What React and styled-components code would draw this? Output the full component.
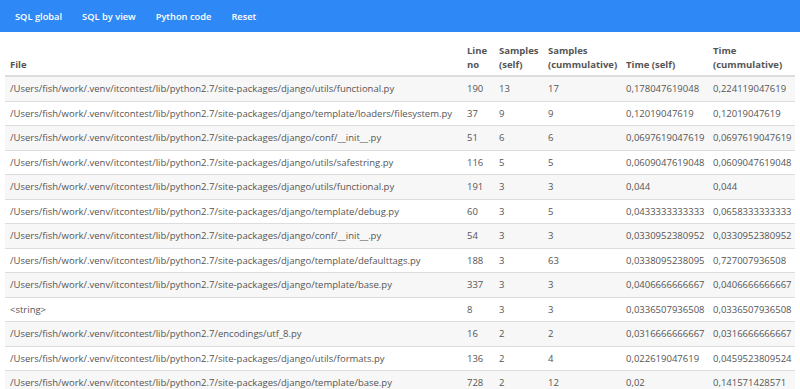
import React from 'react';
import styled, { createGlobalStyle } from 'styled-components';

const GlobalStyle = createGlobalStyle`
    body {
        margin: 0;
        font-family: "Open Sans", "Liberation Sans", sans-serif;
        background-color: #FFFFFF;
        color: #555555;
    }
`;

const rows = [
    ['/Users/fish/work/.venv/itcontest/lib/python2.7/site-packages/django/utils/functional.py', 190, 13, 17, '0,178047619048', '0,224119047619'],
    ['/Users/fish/work/.venv/itcontest/lib/python2.7/site-packages/django/template/loaders/filesystem.py', 37, 9, 9, '0,12019047619', '0,12019047619'],
    ['/Users/fish/work/.venv/itcontest/lib/python2.7/site-packages/django/conf/__init__.py', 51, 6, 6, '0,0697619047619', '0,0697619047619'],
    ['/Users/fish/work/.venv/itcontest/lib/python2.7/site-packages/django/utils/safestring.py', 116, 5, 5, '0,0609047619048', '0,0609047619048'],
    ['/Users/fish/work/.venv/itcontest/lib/python2.7/site-packages/django/utils/functional.py', 191, 3, 3, '0,044', '0,044'],
    ['/Users/fish/work/.venv/itcontest/lib/python2.7/site-packages/django/template/debug.py', 60, 3, 5, '0,0433333333333', '0,0658333333333'],
    ['/Users/fish/work/.venv/itcontest/lib/python2.7/site-packages/django/conf/__init__.py', 54, 3, 3, '0,0330952380952', '0,0330952380952'],
    ['/Users/fish/work/.venv/itcontest/lib/python2.7/site-packages/django/template/defaulttags.py', 188, 3, 63, '0,0338095238095', '0,727007936508'],
    ['/Users/fish/work/.venv/itcontest/lib/python2.7/site-packages/django/template/base.py', 337, 3, 3, '0,0406666666667', '0,0406666666667'],
    ['<string>', 8, 3, 3, '0,0336507936508', '0,0336507936508'],
    ['/Users/fish/work/.venv/itcontest/lib/python2.7/encodings/utf_8.py', 16, 2, 2, '0,0316666666667', '0,0316666666667'],
    ['/Users/fish/work/.venv/itcontest/lib/python2.7/site-packages/django/utils/formats.py', 136, 2, 4, '0,022619047619', '0,0459523809524'],
    ['/Users/fish/work/.venv/itcontest/lib/python2.7/site-packages/django/template/base.py', 728, 2, 12, '0,02', '0,141571428571'],
];

const navItems = ['SQL global', 'SQL by view', 'Python code', 'Reset'];

const App = () => {
    return (
        <>
            <GlobalStyle />
            <NavBar>
                {navItems.map((item) => (
                    <NavLink key={item}>{item}</NavLink>
                ))}
            </NavBar>
            <Content>
                <TableStyle>
                    <thead>
                        <tr>
                            <th>File</th>
                            <th>Line<br />no</th>
                            <th>Samples<br />(self)</th>
                            <th>Samples<br />(cummulative)</th>
                            <th>Time (self)</th>
                            <th>Time<br />(cummulative)</th>
                        </tr>
                    </thead>
                    <tbody>
                        {rows.map((row, i) => (
                            <tr key={i}>
                                {row.map((cell, j) => (
                                    <td key={j}>{cell}</td>
                                ))}
                            </tr>
                        ))}
                    </tbody>
                </TableStyle>
            </Content>
        </>
    );
};

export default App;

const NavBar = styled.div`
    height: 32px;
    background-color: #2E88F5;
    display: flex;
    align-items: center;
    padding: 0 0 0 15px;
`;

const NavLink = styled.a`
    color: #FFFFFF;
    font-size: 9.3px;
    font-weight: 600;
    margin-right: 20px;
    cursor: pointer;
    white-space: nowrap;
`;

const Content = styled.div`
    padding: 6px 5px 0;
`;

const TableStyle = styled.table`
    border-collapse: collapse;
    width: 790px;
    table-layout: fixed;
    font-size: 9.5px;

    th:nth-child(1) { width: 447px; }
    th:nth-child(2) { width: 22px; }
    th:nth-child(3) { width: 39px; }
    th:nth-child(4) { width: 68px; }
    th:nth-child(5) { width: 77px; }
    th:nth-child(6) { width: 77px; }

    th, td {
        text-align: left;
        padding: 5px 5px 4.5px;
        line-height: 14px;
        white-space: nowrap;
        overflow: hidden;
    }

    thead th {
        vertical-align: bottom;
        font-weight: 700;
        color: #555555;
        border-bottom: 2px solid #DDDDDD;
        padding-top: 6px;
        padding-bottom: 3px;
    }

    tbody td {
        border-top: 1px solid #DDDDDD;
        color: #555555;
    }

    tbody tr:first-child td {
        border-top: none;
    }

    tbody tr:nth-child(odd) {
        background-color: #F7F7F7;
    }
`;
